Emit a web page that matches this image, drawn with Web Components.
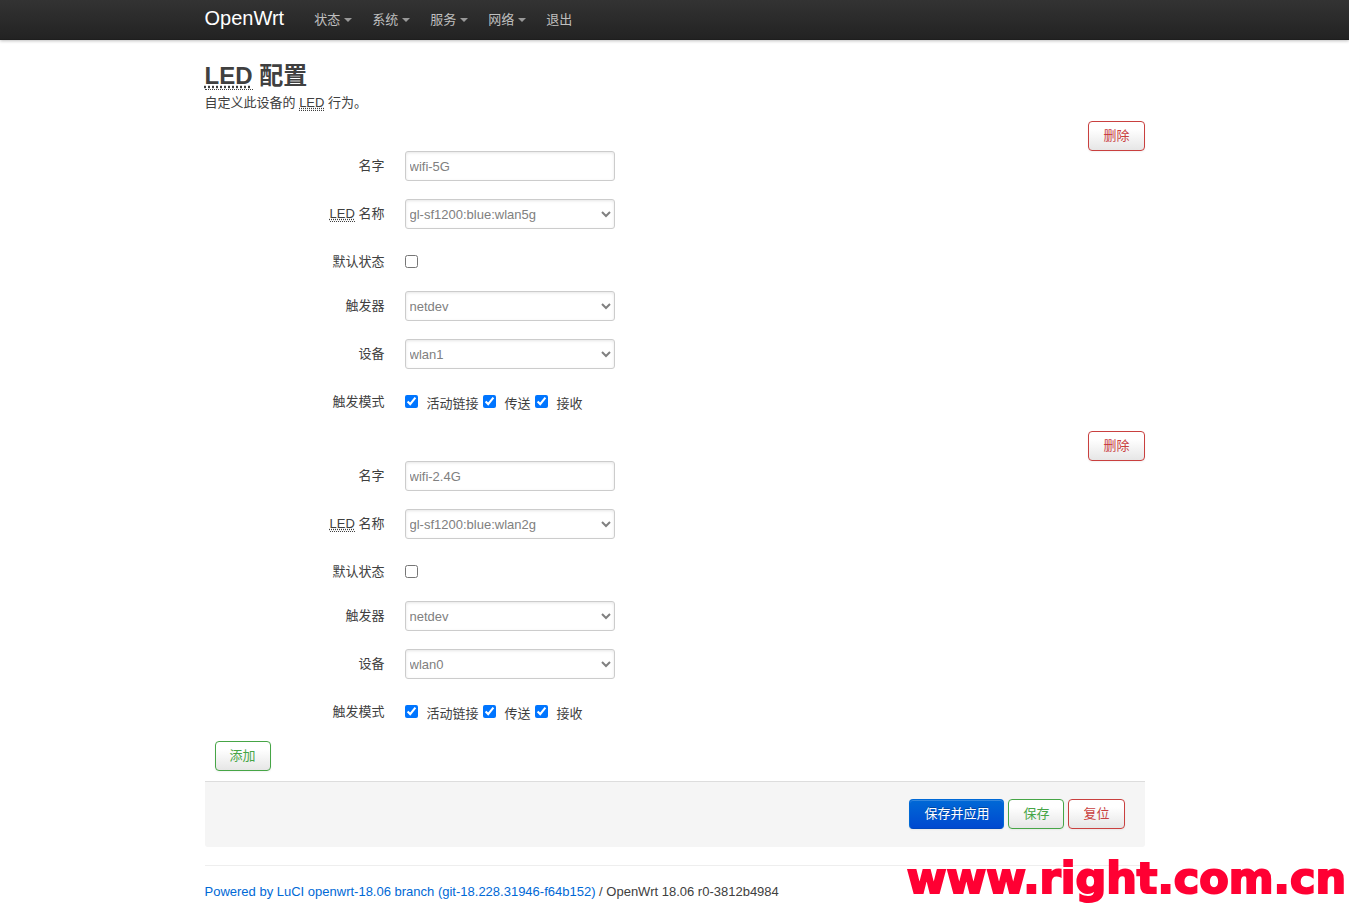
<!DOCTYPE html>
<html lang="zh-CN">
<head>
<meta charset="utf-8">
<meta name="viewport" content="width=device-width, initial-scale=1">
<title>OpenWrt - LED 配置 - LuCI</title>
<style>
  body {
    margin: 0;
    background: #fff;
    color: #404040;
    font: 13px/18px "Liberation Sans", "Noto Sans CJK SC", sans-serif;
  }
  luci-abbr { cursor: help; }
</style>
</head>
<body>
<luci-header brand="OpenWrt">
  <luci-menu dropdown>状态</luci-menu>
  <luci-menu dropdown>系统</luci-menu>
  <luci-menu dropdown>服务</luci-menu>
  <luci-menu dropdown>网络</luci-menu>
  <luci-menu>退出</luci-menu>
</luci-header>

<luci-page>
  <luci-map>
    <span slot="title"><luci-abbr>LED</luci-abbr> 配置</span>
    <span slot="descr">自定义此设备的 <luci-abbr>LED</luci-abbr> 行为。</span>

    <luci-section>
      <luci-text value="wifi-5G">名字</luci-text>
      <luci-select value="gl-sf1200:blue:wlan5g"><luci-abbr>LED</luci-abbr> 名称</luci-select>
      <luci-flag>默认状态</luci-flag>
      <luci-select value="netdev">触发器</luci-select>
      <luci-select value="wlan1">设备</luci-select>
      <luci-multi options="活动链接,传送,接收">触发模式</luci-multi>
    </luci-section>

    <luci-section>
      <luci-text value="wifi-2.4G">名字</luci-text>
      <luci-select value="gl-sf1200:blue:wlan2g"><luci-abbr>LED</luci-abbr> 名称</luci-select>
      <luci-flag>默认状态</luci-flag>
      <luci-select value="netdev">触发器</luci-select>
      <luci-select value="wlan0">设备</luci-select>
      <luci-multi options="活动链接,传送,接收">触发模式</luci-multi>
    </luci-section>

    <luci-button slot="add" kind="positive">添加</luci-button>
  </luci-map>

  <luci-actions>
    <luci-button kind="primary">保存并应用</luci-button>
    <luci-button kind="positive">保存</luci-button>
    <luci-button kind="negative">复位</luci-button>
  </luci-actions>

  <luci-footer></luci-footer>
</luci-page>

<site-mark>www.right.com.cn</site-mark>

<script>
  const define = (name, render) => customElements.define(name, class extends HTMLElement {
    connectedCallback() {
      if (this.shadowRoot) return;
      this.attachShadow({ mode: 'open' }).innerHTML = render(this);
    }
  });

  define('luci-header', el => `
    <style>
      :host {
        display: block;
        background: linear-gradient(#333, #222);
        box-shadow: 0 1px 3px rgba(0, 0, 0, .25), inset 0 -1px 0 rgba(0, 0, 0, .1);
      }
      .fill { max-width: 940px; margin: 0 auto; display: flex; align-items: center; height: 40px; }
      .brand { color: #fff; font-size: 20px; line-height: 20px; padding: 6px 20px 10px 0; text-decoration: none; }
      nav { display: flex; }
    </style>
    <header class="fill">
      <a class="brand" href="#">${el.getAttribute('brand')}</a>
      <nav><slot></slot></nav>
    </header>`);

  define('luci-menu', el => `
    <style>
      :host { display: block; }
      a { display: flex; align-items: center; gap: 4px; padding: 10px; line-height: 18px; color: #bfbfbf; text-decoration: none; }
      i { border: 4px solid transparent; border-bottom: 0; border-top-color: #999; }
    </style>
    <a href="#"><slot></slot>${el.hasAttribute('dropdown') ? '<i></i>' : ''}</a>`);

  define('luci-abbr', () => `
    <style>
      :host { display: inline; }
      abbr { text-decoration: underline dotted; border-bottom: 1px dotted #404040; }
    </style>
    <abbr><slot></slot></abbr>`);

  define('luci-page', () => `
    <style>
      :host { display: block; max-width: 940px; margin: 0 auto; padding-top: 18px; }
    </style>
    <main><slot></slot></main>`);

  define('luci-map', () => `
    <style>
      :host { display: block; }
      h2 { margin: 0; font-size: 24px; line-height: 36px; }
      p { margin: 0 0 9px; }
      .add { display: flex; padding: 0 10px 10px; }
    </style>
    <h2><slot name="title"></slot></h2>
    <p><slot name="descr"></slot></p>
    <slot></slot>
    <div class="add"><slot name="add"></slot></div>`);

  define('luci-section', () => `
    <style>
      :host { display: block; }
      .remove { display: flex; justify-content: flex-end; }
    </style>
    <div class="remove"><luci-button kind="negative">删除</luci-button></div>
    <slot></slot>`);

  define('luci-button', el => `
    <style>
      :host { display: block; }
      button {
        display: block;
        box-sizing: border-box;
        height: 30px;
        margin: 0;
        padding: 0 14px;
        border: 1px solid;
        border-radius: 4px;
        font: inherit;
        line-height: 18px;
        cursor: pointer;
        background: linear-gradient(#fff, #fff 25%, #e6e6e6);
        box-shadow: inset 0 1px 0 rgba(255, 255, 255, .2), 0 1px 2px rgba(0, 0, 0, .05);
      }
      .positive { color: #46a546; border-color: #46a546; }
      .negative { color: #c9403f; border-color: #c9403f; }
      .primary {
        color: #fff;
        border-color: #0069d6 #0069d6 #0047bd;
        background: linear-gradient(#0069d6, #0049d0);
        text-shadow: 0 -1px 0 rgba(0, 0, 0, .25);
      }
    </style>
    <button type="button" class="${el.getAttribute('kind')}"><slot></slot></button>`);

  /* Layout and control styles shared by every option row. */
  const fieldStyle = `
    <style>
      :host { display: block; margin-bottom: 18px; }
      .row { display: flex; gap: 20px; }
      .title { width: 180px; padding-top: 6px; text-align: right; line-height: 18px; }
      .box {
        box-sizing: border-box;
        width: 210px;
        height: 30px;
        margin: 0;
        padding: 4px;
        border: 1px solid #ccc;
        border-radius: 3px;
        background: #fff;
        color: #808080;
        font: inherit;
        box-shadow: inset 0 1px 3px rgba(0, 0, 0, .1);
      }
      select.box { padding: 4px 1px 4px 0; }
      input[type=checkbox] { width: 13px; height: 13px; margin: 0; }
      .checks { display: flex; gap: 4px; height: 26px; padding-top: 8px; box-sizing: border-box; }
      .check { display: flex; gap: 9px; }
      .check label { line-height: 18px; }
    </style>`;

  define('luci-text', el => `${fieldStyle}
    <div class="row">
      <label class="title" for="c"><slot></slot></label>
      <input class="box" id="c" type="text" value="${el.getAttribute('value')}">
    </div>`);

  define('luci-select', el => `${fieldStyle}
    <div class="row">
      <label class="title" for="c"><slot></slot></label>
      <select class="box" id="c"><option>${el.getAttribute('value')}</option></select>
    </div>`);

  define('luci-flag', () => `${fieldStyle}
    <div class="row">
      <label class="title" for="c"><slot></slot></label>
      <div class="checks"><input id="c" type="checkbox"></div>
    </div>`);

  define('luci-multi', el => `${fieldStyle}
    <div class="row" role="group" aria-labelledby="t">
      <span class="title" id="t"><slot></slot></span>
      <div class="checks">${el.getAttribute('options').split(',').map((text, i) => `
        <span class="check"><input id="o${i}" type="checkbox" checked><label for="o${i}">${text}</label></span>`).join('')}
      </div>
    </div>`);

  define('luci-actions', () => `
    <style>
      :host {
        display: flex;
        justify-content: flex-end;
        gap: 4px;
        margin-bottom: 18px;
        padding: 17px 20px 18px;
        border-top: 1px solid #ddd;
        border-radius: 0 0 3px 3px;
        background: #f5f5f5;
      }
    </style>
    <slot></slot>`);

  define('luci-footer', () => `
    <style>
      :host { display: block; padding: 17px 0 5px; border-top: 1px solid #eee; }
      a { color: #0069d6; text-decoration: none; }
    </style>
    <footer><a href="#">Powered by LuCI openwrt-18.06 branch (git-18.228.31946-f64b152)</a> / OpenWrt 18.06 r0-3812b4984</footer>`);

  define('site-mark', () => `
    <style>
      :host {
        position: fixed;
        right: 3px;
        bottom: 4px;
        color: #ff0033;
        font: bold 43px/48px "DejaVu Sans", sans-serif;
        -webkit-text-stroke: 2px #ff0033;
        pointer-events: none;
      }
    </style>
    <slot></slot>`);
</script>
</body>
</html>
